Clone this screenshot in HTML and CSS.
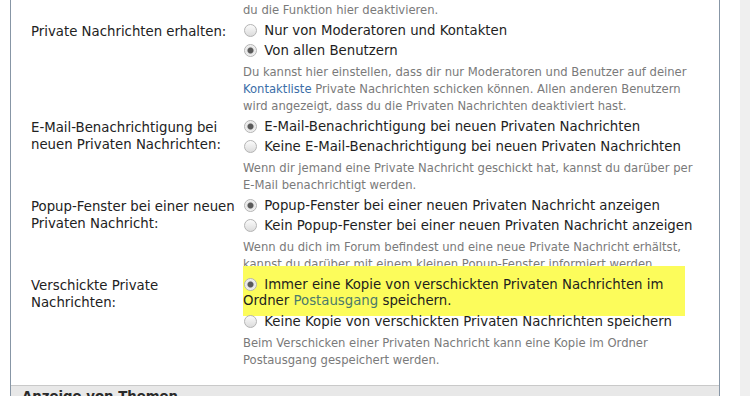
FILE: index.html
```html
<!DOCTYPE html>
<html lang="de">
<head>
	<meta charset="UTF-8">
	<title>Private Nachrichten</title>
	<link rel="stylesheet" href="styles.css">
</head>
<body>
	<div class="page">
		<div class="panel">
			<!-- Einstellungen -->
			<div class="row">
				<div class="label"></div>
				<div class="value">
					<p class="desc desc-top">du die Funktion hier deaktivieren.</p>
				</div>
			</div>

			<div class="row">
				<div class="label">Private Nachrichten erhalten:</div>
				<div class="value">
					<label class="option"><input type="radio" name="pm"> Nur von Moderatoren und Kontakten</label>
					<label class="option"><input type="radio" name="pm" checked> Von allen Benutzern</label>
					<p class="desc">Du kannst hier einstellen, dass dir nur Moderatoren und Benutzer auf deiner <a href="#">Kontaktliste</a> Private Nachrichten schicken können. Allen anderen Benutzern wird angezeigt, dass du die Privaten Nachrichten deaktiviert hast.</p>
				</div>
			</div>

			<div class="row">
				<div class="label">E-Mail-Benachrichtigung bei neuen Privaten Nachrichten:</div>
				<div class="value">
					<label class="option"><input type="radio" name="mail" checked> E-Mail-Benachrichtigung bei neuen Privaten Nachrichten</label>
					<label class="option"><input type="radio" name="mail"> Keine E-Mail-Benachrichtigung bei neuen Privaten Nachrichten</label>
					<p class="desc">Wenn dir jemand eine Private Nachricht geschickt hat, kannst du darüber per E-Mail benachrichtigt werden.</p>
				</div>
			</div>

			<div class="row">
				<div class="label">Popup-Fenster bei einer neuen Privaten Nachricht:</div>
				<div class="value">
					<label class="option"><input type="radio" name="popup" checked> Popup-Fenster bei einer neuen Privaten Nachricht anzeigen</label>
					<label class="option"><input type="radio" name="popup"> Kein Popup-Fenster bei einer neuen Privaten Nachricht anzeigen</label>
					<p class="desc">Wenn du dich im Forum befindest und eine neue Private Nachricht erhältst, kannst du darüber mit einem kleinen Popup-Fenster informiert werden.</p>
				</div>
			</div>

			<div class="row">
				<div class="label">Verschickte Private Nachrichten:</div>
				<div class="value">
					<div class="highlight">
						<label class="option"><input type="radio" name="copy" checked> Immer eine Kopie von verschickten Privaten Nachrichten im Ordner <a href="#">Postausgang</a> speichern.</label>
					</div>
					<label class="option"><input type="radio" name="copy"> Keine Kopie von verschickten Privaten Nachrichten speichern</label>
					<p class="desc">Beim Verschicken einer Privaten Nachricht kann eine Kopie im Ordner Postausgang gespeichert werden.</p>
				</div>
			</div>
		</div>

		<div class="section-head">Anzeige von Themen</div>
	</div>
	<div class="scroll-gap"></div>
	<div class="sidebar"></div>
</body>
</html>
```

FILE: styles.css
```css
html, body {
	margin: 0;
	height: 396px;
	overflow: hidden;
	background: #fff;
}

body {
	display: flex;
	font-family: "DejaVu Sans", Verdana, sans-serif;
	font-size: 13.3px;
	color: #1e1e1e;
}

a {
	color: #3b6ea8;
	text-decoration: none;
}

.page {
	margin-left: 10px;
	width: 710px;
	border-left: solid 1px #8796a6;
	border-right: solid 1px #8796a6;
	box-sizing: border-box;
	display: flex;
	flex-direction: column;
}
.scroll-gap {
	width: 20px;
}
.sidebar {
	width: 10px;
	background: #efefef;
}

.panel {
	padding: 2px 0 14px;
}

.row {
	display: grid;
	grid-template-columns: 232px 1fr;
	margin-bottom: 2px;
}
.label {
	padding: 2px 0 0 20px;
	line-height: 17px;
	color: #222;
}
.value {
	padding-right: 18px;
}

.option {
	display: block;
	padding: 2px 0;
	line-height: 16px;
}
.option input[type="radio"] {
	-webkit-appearance: none;
	appearance: none;
	width: 13px;
	height: 13px;
	margin: 0 3px 0 1px;
	vertical-align: -2px;
	border: solid 1px #b4b4b4;
	border-radius: 50%;
	background: linear-gradient(#fbfbfb, #dcdcdc);
	box-sizing: border-box;
}
.option input[type="radio"]:checked {
	background: radial-gradient(circle, #5a5a5a 0, #5a5a5a 2.5px, #e4e4e4 3.5px, #f6f6f6 6px);
}

.highlight {
	background: #fcfc5b;
	width: 442px;
	margin: -9px 0 -4px;
	padding: 9px 0 5px;
}
.highlight a {
	color: #4c7a6a;
}

.desc {
	margin: 3px 0 0;
	font-size: 11.6px;
	line-height: 17px;
	color: #7a7a7a;
}
.desc-top {
	margin: 0;
}

.section-head {
	flex: 1;
	background: #e8e8e8;
	border-top: solid 1px #c9c9c9;
	padding: 3px 0 0 11px;
	font-size: 13.3px;
	font-weight: bold;
	color: #2a2a2a;
}
```
